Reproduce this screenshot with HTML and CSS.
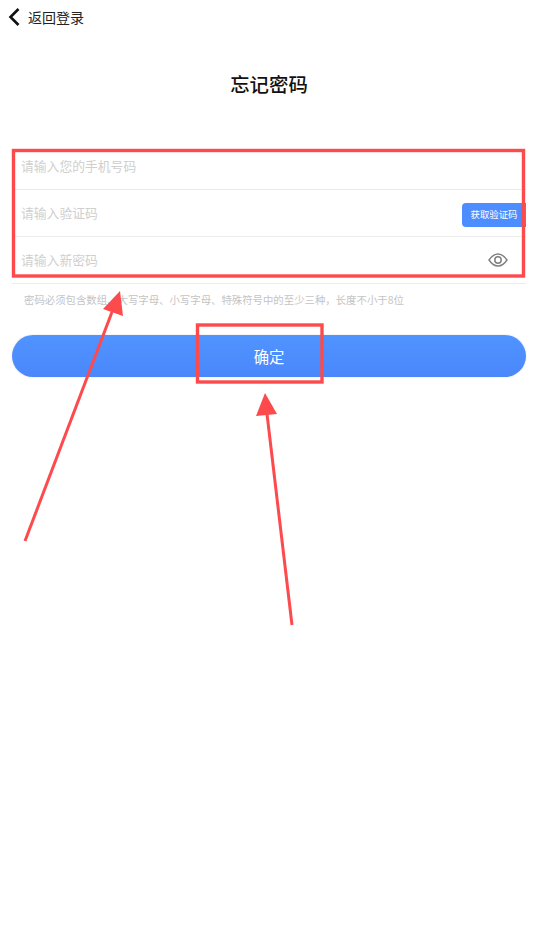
FILE: index.html
```html
<!DOCTYPE html>
<html lang="zh-CN">
<head>
<meta charset="utf-8">
<title>忘记密码</title>
<link rel="stylesheet" href="styles.css">
</head>
<body>
<div class="page">
  <header class="back">
    <svg class="back-icon" width="12" height="18" viewBox="0 0 12 18"><path d="M10.500 1 L2.500 9 L10.500 17" fill="none" stroke="#111" stroke-width="2.600"/></svg>
    <span>返回登录</span>
  </header>
  <h1 class="title">忘记密码</h1>
  <form class="form">
    <div class="row"><span class="ph">请输入您的手机号码</span></div>
    <div class="row"><span class="ph">请输入验证码</span><span class="code">获取验证码</span></div>
    <div class="row"><span class="ph">请输入新密码</span>
      <svg class="eye" width="20" height="14" viewBox="0 0 20 14"><path d="M1 7 C4 2.500 7 1 10 1 C13 1 16 2.500 19 7 C16 11.500 13 13 10 13 C7 13 4 11.500 1 7 Z" fill="none" stroke="#808080" stroke-width="1.400"/><circle cx="10" cy="7" r="3.200" fill="none" stroke="#808080" stroke-width="1.500"/></svg>
    </div>
  </form>
  <p class="hint">密码必须包含数组、大写字母、小写字母、特殊符号中的至少三种，长度不小于8位</p>
  <div class="submit">确定</div>
</div>
<svg class="marks" width="539" height="947" viewBox="0 0 539 947">
  <rect x="13.500" y="150.500" width="510" height="125.500" fill="none" stroke="#fd4a4d" stroke-width="3.400"/>
  <rect x="197.500" y="325" width="124.500" height="57" fill="none" stroke="#fd4a4d" stroke-width="3.400"/>
  <path d="M25 541 L112 312" fill="none" stroke="#fd4a4d" stroke-width="3"/>
  <path d="M120 291 L103 309 L123 316 Z" fill="#fd4a4d"/>
  <path d="M292 625 L267 414" fill="none" stroke="#fd4a4d" stroke-width="3"/>
  <path d="M265 393 L256 416 L277 414 Z" fill="#fd4a4d"/>
</svg>
</body>
</html>
```
FILE: styles.css
```css
html, body { margin: 0; padding: 0; background: #fff; }
body { width: 539px; height: 947px; overflow: hidden; position: relative; font-family: "Noto Sans CJK SC", "Noto Sans", sans-serif; }
.page { padding: 0 13px 0 12px; }
.back { display: flex; align-items: center; gap: 8px; height: 36px; font-size: 14px; color: #222; margin-left: -4px; position: relative; top: -1px; margin-bottom: -3px; }
.back-icon { flex: none; }
.title { margin: 31px 0 0; height: 40px; line-height: 40px; text-align: center; font-size: 19.400px; font-weight: 500; color: #111; }
.form { margin-top: 39px; }
.row { height: 46px; border-bottom: 1px solid #ececec; display: flex; align-items: center; justify-content: space-between; padding-left: 10px; position: relative; }
.ph { font-size: 12.800px; color: #cfcfcf; position: relative; top: -1px; left: -1px; }
.code { position: absolute; right: 0; top: 13px; width: 64px; height: 23.500px; line-height: 23.500px; text-align: center; background: #4d8dff; color: #fff; font-size: 9.400px; border-radius: 4px 0 0 4px; }
.eye { margin-right: 18px; position: relative; }
.hint { margin: 8px 0 0 12px; font-size: 10.400px; line-height: 15px; color: #c4c4c4; white-space: nowrap; }
.submit { margin-top: 28px; height: 42px; line-height: 42px; border-radius: 21px; text-align: center; color: #fff; font-size: 15.360px; background: linear-gradient(#5094ff, #4a87fb); box-shadow: 0 0 2px rgba(0,0,0,.15); }
.marks { position: absolute; left: 0; top: 0; pointer-events: none; }
```
